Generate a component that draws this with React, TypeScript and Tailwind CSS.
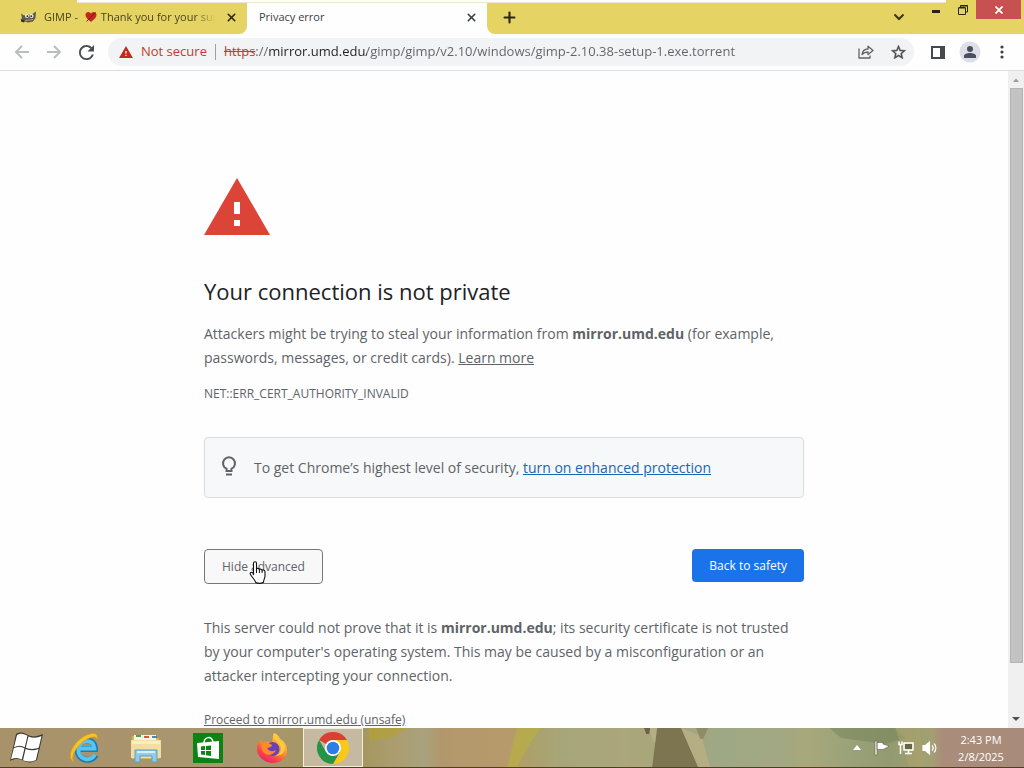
import type { ReactNode } from "react";
import { Plus, X } from "lucide-react";

const HOST = "mirror.umd.edu";
const PATH = "/gimp/gimp/v2.10/windows/gimp-2.10.38-setup-1.exe.torrent";

interface IconButtonProps {
  label: string;
  className?: string;
  children: ReactNode;
}

function IconButton({ label, className = "", children }: IconButtonProps) {
  return (
    <button type="button" aria-label={label} className={`flex shrink-0 items-center justify-center ${className}`}>
      {children}
    </button>
  );
}

function WarningTriangle({ className, fill }: { className: string; fill: string }) {
  return (
    <svg viewBox="0 0 66 57" className={className} aria-hidden="true">
      <path d="M33 0 66 57H0z" fill={fill} />
      <path d="M30 24h6v12h-6zM30 42h6v6h-6z" fill="#fff" />
    </svg>
  );
}

function Wilber() {
  return (
    <svg viewBox="0 0 17 12" className="h-3 w-[17px] shrink-0" aria-hidden="true">
      <path d="M1 2.500 4 4.500 8 3.500 11 4 16 0.500 15.500 7 13 10.500 8 11.500 3.500 10 0.500 9 2 7z" fill="#5f5748" />
      <circle cx="7" cy="5" r="2" fill="#f4f1e8" />
      <circle cx="11.500" cy="5" r="2" fill="#f4f1e8" />
      <circle cx="7.400" cy="5.200" r="0.900" fill="#222" />
      <circle cx="11.300" cy="5.200" r="0.900" fill="#222" />
      <path d="M1 8.500 5 9.500 4 11.500 1 10.500z" fill="#33291c" />
      <path d="M5 9.500 13 8.500" stroke="#c7b68f" strokeWidth="0.800" />
    </svg>
  );
}

function Heart() {
  return (
    <svg viewBox="0 0 12 12" className="mx-1 inline h-3 w-3 align-[-2px]" aria-hidden="true">
      <path d="M6 11C2 8 .5 6 .5 3.800.5 2 2 1 3.300 1 4.600 1 5.600 1.800 6 2.800 6.400 1.800 7.400 1 8.700 1 10 1 11.500 2 11.500 3.800 11.500 6 10 8 6 11z" fill="#c5281c" />
      <path d="M1.500 10.500 10.500 1.500" stroke="#7d1710" strokeWidth="1" />
    </svg>
  );
}

function TabStrip() {
  return (
    <header className="relative flex h-[34px] shrink-0 bg-[#fefefe]">
      <div className="flex w-[247px] shrink-0 items-center rounded-br-lg bg-[#e5d363] pl-5 pr-2">
        <Wilber />
        <span className="ml-[7px] flex-1 overflow-hidden whitespace-nowrap text-[11px] text-[#4a4424] [mask-image:linear-gradient(to_right,#000_88%,transparent)]">
          GIMP - <Heart />
          Thank you for your support
        </span>
        <IconButton label="Close GIMP tab" className="ml-2 h-4 w-4 text-[#2b2717]">
          <X size={13} strokeWidth={3} />
        </IconButton>
      </div>
      <div className="flex w-[240px] shrink-0 items-center justify-between pl-3 pr-2">
        <span className="text-[11px] text-[#3c4043]">Privacy error</span>
        <IconButton label="Close Privacy error tab" className="h-4 w-4 text-[#3c4043]">
          <X size={13} strokeWidth={3} />
        </IconButton>
      </div>
      <div className="flex min-w-0 flex-1 rounded-bl-lg bg-[#e5d363] pl-3">
        <IconButton label="New tab" className="w-5 text-[#2b2717]">
          <Plus size={17} strokeWidth={3} />
        </IconButton>
        <div className="flex-1" />
        <IconButton label="Search tabs" className="mr-3 w-6">
          <svg viewBox="0 0 12 8" className="h-2 w-3" fill="none" stroke="#3a3418" strokeWidth="2">
            <path d="m1.500 1.500 4.500 4.500 4.500-4.500" />
          </svg>
        </IconButton>
        <div className="z-10 flex h-[19px]">
          <IconButton label="Minimize" className="w-[26px]">
            <svg viewBox="0 0 8 3" className="mt-1 h-[3px] w-2">
              <path d="M0 0h8v3H0z" fill="#2a2614" />
            </svg>
          </IconButton>
          <IconButton label="Restore" className="w-[27px]">
            <svg viewBox="0 0 10 10" className="h-[10px] w-[10px]" fill="none" stroke="#2a2614">
              <path d="M.5 3h7v6.500h-7zM.5 2.500h7M2.500 2.500V.5h7v6.500h-2M2.500 1h7" />
            </svg>
          </IconButton>
          <IconButton label="Close window" className="mr-[3px] w-[45px] bg-[#c75050]">
            <svg viewBox="0 0 8 8" className="h-2 w-2" stroke="#fff" strokeWidth="1.800">
              <path d="m.5.5 7 7m0-7-7 7" />
            </svg>
          </IconButton>
        </div>
      </div>
      <div className="absolute left-[77px] right-[78px] top-0 h-[3px] border-b border-[#ece8cf] bg-[#fefefe]" />
    </header>
  );
}

function Arrow({ flip = false }: { flip?: boolean }) {
  return (
    <svg viewBox="0 0 16 14" className={flip ? "h-[14px] w-4 rotate-180" : "h-[14px] w-4"} fill="none" stroke="#babcbe" strokeWidth="2">
      <path d="M15 7H2M8 1 2 7l6 6" />
    </svg>
  );
}

function Toolbar() {
  return (
    <nav className="flex h-[37px] shrink-0 items-center border-b border-[#dcdee0] bg-[#fefefe] pl-2 pr-[6px]">
      <IconButton label="Back" className="w-7">
        <Arrow />
      </IconButton>
      <IconButton label="Forward" className="ml-1 w-7">
        <Arrow flip />
      </IconButton>
      <IconButton label="Reload" className="ml-1 w-7">
        <svg viewBox="4 4 16 16" className="h-[15px] w-[15px]" fill="#4a4d51">
          <path d="M17.650 6.350C16.200 4.900 14.210 4 12 4c-4.420 0-7.990 3.580-7.990 8s3.570 8 7.990 8c3.730 0 6.840-2.550 7.730-6h-2.080c-.82 2.330-3.040 4-5.650 4-3.310 0-6-2.690-6-6s2.690-6 6-6c1.660 0 3.140.69 4.220 1.780L13 11h7V4l-2.350 2.350z" />
        </svg>
      </IconButton>
      <div className="ml-2 flex h-7 min-w-0 flex-1 items-center rounded-full bg-[#f1f3f4] pl-[11px] text-[13px]">
        <button type="button" className="flex shrink-0 items-center gap-2 text-[#c5392f]">
          <WarningTriangle className="h-3 w-[14px]" fill="#c5281c" />
          Not secure
        </button>
        <span className="mx-2 h-4 w-px shrink-0 bg-[#9aa0a6]" />
        <label htmlFor="address" className="shrink-0 text-[#c5392f] line-through">
          https
        </label>
        <input
          id="address"
          type="text"
          defaultValue={`://${HOST}${PATH}`}
          className="min-w-0 flex-1 bg-[linear-gradient(to_right,#5f6368_13px,#202124_13px,#202124_112px,#5f6368_112px)] bg-clip-text text-transparent outline-none"
        />
        <IconButton label="Share this page" className="w-8">
          <svg viewBox="0 0 16 14" className="h-[14px] w-4" fill="none" stroke="#5f6368" strokeWidth="1.300">
            <path d="M1 3.500V13h11v-2.500M4 9.500C4.500 6 6.500 4 10 4V1.200L15 5.500 10 9.500V7C7.500 7 5.500 7.800 4 9.500z" strokeLinejoin="round" />
          </svg>
        </IconButton>
        <IconButton label="Bookmark this tab" className="w-8">
          <svg viewBox="2 2 20 19" className="h-[14px] w-[15px]" fill="#4a4d51" stroke="#4a4d51" strokeWidth="0.500">
            <path d="m22 9.240-7.190-.62L12 2 9.190 8.630 2 9.240l5.460 4.730L5.820 21 12 17.270 18.180 21l-1.630-7.030L22 9.240zM12 15.400l-3.760 2.270 1-4.280-3.320-2.880 4.380-.38L12 6.100l1.710 4.040 4.380.38-3.320 2.880 1 4.280L12 15.400z" />
          </svg>
        </IconButton>
      </div>
      <IconButton label="Side panel" className="ml-2 w-8">
        <svg viewBox="0 0 14 13" className="h-[13px] w-[14px]">
          <path d="M1 1h12v11H1z" fill="none" stroke="#46494d" strokeWidth="2" />
          <path d="M9 1h4v11H9z" fill="#46494d" />
        </svg>
      </IconButton>
      <IconButton label="Profile" className="h-[22px] w-8">
        <svg viewBox="0 0 22 22" className="h-[22px] w-[22px]">
          <circle cx="11" cy="11" r="10.500" fill="#dcdee8" />
          <circle cx="11" cy="8" r="3" fill="#4a4f5e" />
          <path d="M5 17v-2c0-2 3-3 6-3s6 1 6 3v2z" fill="#4a4f5e" />
        </svg>
      </IconButton>
      <IconButton label="Menu" className="h-6 w-8">
        <svg viewBox="0 0 4 14" className="h-[14px] w-1" fill="#3c4043">
          <circle cx="2" cy="2" r="1.600" />
          <circle cx="2" cy="7" r="1.600" />
          <circle cx="2" cy="12" r="1.600" />
        </svg>
      </IconButton>
    </nav>
  );
}

function HandCursor() {
  return (
    <svg viewBox="0 0 18 23" className="pointer-events-none absolute left-11 top-3 h-[23px] w-[18px]" aria-hidden="true">
      <path
        d="M5.500 14V2.200c0-2 3-2 3 0V8c.6-1 2.700-.8 2.900.6.800-.9 2.600-.5 2.700.8.900-.8 2.900-.3 2.900 1.300v4.500c0 2-1.500 3.500-1.500 6-2.500 1.400-5.500 1.400-8 0-.5-2.500-3-4.200-5-7.800-1-1.800 1-3 2.500-1.200z"
        fill="#fff"
        stroke="#111"
        strokeWidth="1.100"
      />
      <path d="M8.500 8v4M11.400 8.600V12M14.100 9.600V12" stroke="#111" />
    </svg>
  );
}

function PrivacyError() {
  return (
    <main className="min-w-0 flex-1 overflow-hidden bg-[#fefefe] text-[14px] leading-6 text-[#5f6368]">
      <div className="mx-auto w-full max-w-[600px] pt-[107px]">
        <WarningTriangle className="h-[57px] w-[66px]" fill="#db4437" />
        <h1 className="mt-10 text-[22px] leading-8 text-[#202124]">Your connection is not private</h1>
        <p className="mt-[15px]">
          Attackers might be trying to steal your information from <b>{HOST}</b> (for example, passwords, messages, or credit
          cards).{" "}
          <a href="#learn" className="underline">
            Learn more
          </a>
        </p>
        <p className="mt-3 text-[12px]">NET::ERR_CERT_AUTHORITY_INVALID</p>
        <div className="mt-[31px] flex h-[61px] items-center rounded-sm border border-[#dadce0] bg-[#f7f8f9] pl-4">
          <svg viewBox="0 0 16 20" className="mb-1 h-5 w-4" fill="none" stroke="#5f6368" strokeWidth="2">
            <path d="M5.500 15v-2.300A6 6 0 1 1 10.500 12.700V15zM5 18.500h6" />
          </svg>
          <p className="ml-[17px]">
            To get Chrome’s highest level of security,{" "}
            <a href="#protect" className="text-[#1967b2] underline">
              turn on enhanced protection
            </a>
          </p>
        </div>
        <div className="mt-[51px] flex items-start justify-between">
          <div className="relative">
            <button type="button" className="h-[35px] rounded border border-[#74777b] bg-[#f8f8f8] px-[17px] text-[12px]">
              Hide advanced
            </button>
            <HandCursor />
          </div>
          <button type="button" className="h-[33px] rounded bg-[#1a73e8] px-[17px] text-[12px] text-white">
            Back to safety
          </button>
        </div>
        <p className="mt-8">
          This server could not prove that it is <b>{HOST}</b>; its security certificate is not trusted by your computer's
          operating system. This may be caused by a misconfiguration or an attacker intercepting your connection.
        </p>
        <a href="#proceed" className="mt-5 block text-[12px] underline">
          Proceed to {HOST} (unsafe)
        </a>
      </div>
    </main>
  );
}

function Scrollbar() {
  return (
    <div className="flex w-4 shrink-0 flex-col items-center bg-[#f0f0f0]" aria-hidden="true">
      <svg viewBox="0 0 16 17" className="h-[17px] w-4">
        <path d="m5 11 3-3.500 3 3.500z" fill="#9a9a9a" />
      </svg>
      <div className="w-[13px] flex-[12] border border-[#b4b4b4] bg-[#c3c3c3]" />
      <div className="flex-1" />
      <svg viewBox="0 0 16 17" className="h-[17px] w-4">
        <path d="M4 6h8l-4 4z" fill="#505050" />
      </svg>
    </div>
  );
}

function WindowsLogo() {
  return (
    <svg viewBox="0 0 38 34" className="h-[34px] w-[38px]">
      <path d="M8 3C13 0 16 2 20 4c4 2 8 2 15-1l-6 26c-5 3-9 3-13 1-4-2-8-3-14 0z" fill="#3c3932" />
      <path d="M9 4C13 1.500 16.500 3 19.500 4.800l-2.700 11.400c-3.500-2-7-2-10.800 0zM20.500 5.500c4.500 1.800 8.500 1.500 13-.5l-2.700 11.600c-4.300 2-8.500 1.800-13 .2zM5.800 17.200c3.700-2 7.200-2 10.700 0L13.800 28.600c-3.500-2-7-2-10.800-.3zM17.600 18c4.400 1.600 8.500 1.800 12.900 0L27.900 28.900c-4.200 2-8.500 2-12.900.3z" fill="#fff" />
    </svg>
  );
}

function ExplorerE() {
  return (
    <svg viewBox="0 0 32 32" className="h-8 w-8" fill="none">
      <path d="M27 23c-2.500 4-7 5.500-11 4.500-5-1.300-8-5.500-7.500-10.500C9 12 12.500 8.500 17.500 8.500c5.500 0 8.500 3.500 8.500 8.500H9" stroke="#1f7cb3" strokeWidth="6" />
      <path d="M26 22.500c-2.500 4-6.500 5.300-10 4.300-4.500-1.300-7-5-6.500-9.500.5-4.800 3.700-8 8-8 5 0 7.500 3 7.800 7.200H10" stroke="#5ac4ee" strokeWidth="4" />
      <path d="M5 30C-3 26 3 12 14 5c8-5 16-5 14 2 0-3-6-3-13 2C7 15 1 25 5 30z" fill="#f4c524" stroke="#d99e18" strokeWidth="0.800" />
    </svg>
  );
}

function FolderIcon() {
  return (
    <svg viewBox="0 0 32 30" className="h-[30px] w-8">
      <path d="M2 3h10l2 2h15v21H2z" fill="#d7b45f" />
      <path d="M4 2h22v6H4z" fill="#f8f4e4" />
      <path d="M6 2h5v2H6z" fill="#4b9e55" />
      <path d="M14 3h5v2h-5z" fill="#d45a43" />
      <path d="M22 3h5v2h-5z" fill="#4d87b8" />
      <path d="M1 7h30v18H1z" fill="#f4dda0" />
      <path d="M2 8h28v3H2z" fill="#faedc4" />
      <path d="M5 17h22v12h-5v-6H10v6H5z" fill="#91cbea" stroke="#5d9fc4" />
      <path d="M7 19h18" stroke="#d7f0fb" strokeWidth="2" />
    </svg>
  );
}

function StoreIcon() {
  return (
    <svg viewBox="0 0 30 30" className="h-[30px] w-[30px]">
      <path d="M0 0h30v30H0z" fill="#0b8414" />
      <path d="M4 10 26 8v18L5 24z" fill="#fff" />
      <path d="M11 10c0-6 8-8 9-1" fill="none" stroke="#fff" strokeWidth="1.500" />
      <path d="m8 13.500 4-.5v4H8zM13 13l5-.5V17h-5zM8 18h4v4l-4-.5zM13 18h5v5l-5-.8z" fill="#0b8414" />
    </svg>
  );
}

function FirefoxIcon() {
  return (
    <svg viewBox="0 0 32 32" className="h-8 w-8">
      <defs>
        <linearGradient id="fox" x1="0.800" y1="0" x2="0.200" y2="1">
          <stop offset="0" stopColor="#ffe14a" />
          <stop offset="0.450" stopColor="#ff9227" />
          <stop offset="0.750" stopColor="#f9404d" />
          <stop offset="1" stopColor="#e11f78" />
        </linearGradient>
      </defs>
      <path d="M18 1c3 1 5 3 6 6 4 2 7 6 7 11 0 8-6 13-14 13S1 25 1 17c0-4 1-7 4-9l2 3c2-1 5-2 9 0 1-3 0-6 2-10z" fill="url(#fox)" />
      <circle cx="16.500" cy="17" r="7" fill="#6942bb" />
      <path d="M5 11c5-2 8 0 11 2 0 2-3 3-5 3 2 4 6 4 9 2-2 6-11 7-14 0z" fill="#ff8a27" />
      <path d="M18 1c-2 6 4 8 6 12 3 5-1 10-5 11 7 0 10-4 10-9 0-6-10-7-11-14z" fill="#ffcc3b" />
    </svg>
  );
}

function ChromeIcon() {
  return (
    <svg viewBox="0 0 32 32" className="h-8 w-8">
      <path d="M16 16 2.140 8A16 16 0 0 1 29.860 8z" fill="#dc3e34" />
      <path d="M16 8h13.860A16 16 0 0 1 16 32l6.900-12z" fill="#fbc719" />
      <path d="m9.100 20-6.960-12A16 16 0 0 0 16 32l6.900-12z" fill="#259447" />
      <circle cx="16" cy="16" r="8" fill="#fff" />
      <circle cx="16" cy="16" r="6.300" fill="#2d7de9" />
    </svg>
  );
}

function TrayIcons() {
  return (
    <div className="flex items-center gap-2">
      <IconButton label="Show hidden icons" className="mr-[3px] w-3">
        <svg viewBox="0 0 8 5" className="h-[5px] w-2">
          <path d="m0 5 4-5 4 5z" fill="#fff" />
        </svg>
      </IconButton>
      <IconButton label="Action Center" className="w-4">
        <svg viewBox="0 0 16 16" className="h-4 w-4" fill="#fff" stroke="#5f5b43" strokeWidth="0.600">
          <path d="M1 1h2v14H1zM3 2.500h6v1.500l6 2-2 1.500L9 9.500H3z" />
        </svg>
      </IconButton>
      <IconButton label="Network" className="w-4">
        <svg viewBox="0 0 16 16" className="h-4 w-4" fill="none" stroke="#fff" strokeWidth="1.500">
          <path d="M6 3h9v7H6zM10.500 10v3M7 13.500h7M1 1.500v3h3v-3M2.500 4.500V14" />
          <path d="M7 4h7v5H7z" fill="#656548" stroke="none" />
        </svg>
      </IconButton>
      <IconButton label="Volume" className="w-4">
        <svg viewBox="0 0 16 16" className="h-4 w-4" fill="none" stroke="#fff" strokeWidth="1.200">
          <path d="M1 5.500h2.500L7.500 2v12l-4-3.500H1z" fill="#fff" />
          <path d="M10 5.500c1.500 1.500 1.500 3.500 0 5M12 3.500c2.500 2.500 2.500 6.500 0 9" />
        </svg>
      </IconButton>
    </div>
  );
}

function Taskbar() {
  return (
    <footer className="relative flex h-10 shrink-0 items-center border-b border-[#563a26] bg-[linear-gradient(to_right,#a8926a_0%,#a9966f_24%,#a2975f_35%,#ab9c6c_38%,#a9a27e_41.500%,#b1986c_43%,#b79a6b_50%,#aba16c_52%,#a7a67a_55%,#aba67b_61%,#a8a67c_64%,#9ea884_70%,#a2a883_76%,#a8a87a_79%,#9aa279_83%,#929b70_87%,#a3a073_91%,#a98d7a_92%,#a88b7a_100%)]">
      {/* wallpaper showing through the glass */}
      <svg viewBox="0 0 655 39" preserveAspectRatio="none" className="absolute left-[36%] top-0 h-[39px] w-[64%]" aria-hidden="true">
        <path d="M0 0h38l-14 9-24 4z" fill="#b5a22c" opacity="0.600" />
        <path d="M148 0h24l-10 14-14 25h-10z" fill="#b9b23a" opacity="0.600" />
        <path d="M280 0h14l-6 14-4 0z" fill="#b6ae84" />
        <path d="M275 0h6l-1 6h-3z" fill="#6d6147" />
        <path d="M288 0h24l17 39h-46z" fill="#7d7550" />
        <path d="m312 0 20 8 9 31h-12z" fill="#b5ad84" />
        <path d="M327 0h12l-5 11h-3z" fill="#8b8461" opacity="0.800" />
        <path d="M460 0h66l10 10-20 6-44-6z" fill="#76815a" opacity="0.500" />
        <path d="M526 0h24l6 39h-16z" fill="#aaa26c" opacity="0.600" />
      </svg>
      <IconButton label="Start" className="ml-2 w-[38px]">
        <WindowsLogo />
      </IconButton>
      <IconButton label="Internet Explorer" className="ml-2 w-[61px]">
        <ExplorerE />
      </IconButton>
      <IconButton label="File Explorer" className="w-[61px]">
        <FolderIcon />
      </IconButton>
      <IconButton label="Store" className="w-[64px]">
        <StoreIcon />
      </IconButton>
      <IconButton label="Firefox" className="w-[63px]">
        <FirefoxIcon />
      </IconButton>
      <IconButton label="Google Chrome" className="h-full w-[60px] border border-[#f3edda] bg-[#c5b9a2]">
        <ChromeIcon />
      </IconButton>
      <div className="relative ml-auto flex items-center">
        <TrayIcons />
        <div className="w-[86px] text-center text-[11px] leading-[17px] text-white">
          <time className="block">2:43 PM</time>
          <time className="block">2/8/2025</time>
        </div>
      </div>
    </footer>
  );
}

export default function App() {
  return (
    <div className="flex h-screen flex-col overflow-hidden bg-[#fefefe] font-['Open_Sans',sans-serif]">
      <TabStrip />
      <Toolbar />
      <div className="flex min-h-0 flex-1">
        <PrivacyError />
        <Scrollbar />
      </div>
      <Taskbar />
    </div>
  );
}
